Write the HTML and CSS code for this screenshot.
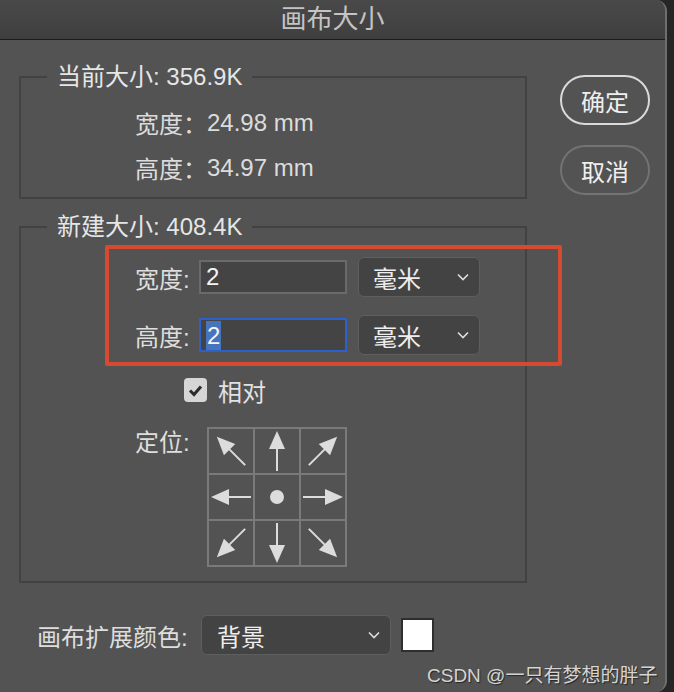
FILE: index.html
```html
<!DOCTYPE html>
<html lang="zh-CN">
<head>
<meta charset="utf-8">
<title>画布大小</title>
<link rel="stylesheet" href="styles.css">
</head>
<body>
<div class="window">
  <header class="titlebar">画布大小</header>
  <div class="main">
    <div class="left">
      <fieldset class="group current">
        <legend>当前大小: 356.9K</legend>
        <div class="info-rows">
          <div class="info-row"><span class="info-label">宽度：</span><span class="info-value">24.98 mm</span></div>
          <div class="info-row"><span class="info-label">高度：</span><span class="info-value">34.97 mm</span></div>
        </div>
      </fieldset>
      <fieldset class="group new">
        <legend>新建大小: 408.4K</legend>
        <div class="new-body">
          <div class="field-row">
            <span class="field-label">宽度:</span>
            <div class="text-input"><span>2</span></div>
            <div class="select unit"><span>毫米</span><svg class="chev" width="12" height="8" viewBox="0 0 12 8"><polyline points="1,1.5 6,6.5 11,1.5"/></svg></div>
          </div>
          <div class="field-row">
            <span class="field-label">高度:</span>
            <div class="text-input focused"><span class="selected">2</span></div>
            <div class="select unit"><span>毫米</span><svg class="chev" width="12" height="8" viewBox="0 0 12 8"><polyline points="1,1.5 6,6.5 11,1.5"/></svg></div>
          </div>
          <div class="check-row">
            <span class="checkbox"><svg width="23" height="24" viewBox="0 0 23 24"><polyline points="6,12.5 10,16.5 17,8.5"/></svg></span>
            <span class="check-label">相对</span>
          </div>
          <div class="anchor-row">
            <span class="anchor-label">定位:</span>
            <div class="anchor-grid">
              <div class="cell"><svg viewBox="0 0 44 44"><g transform="rotate(-45 22 22)"><polygon points="22,2 14,20 30,20"/><line x1="22" y1="19" x2="22" y2="42"/></g></svg></div>
              <div class="cell"><svg viewBox="0 0 44 44"><g><polygon points="22,2 14,20 30,20"/><line x1="22" y1="19" x2="22" y2="42"/></g></svg></div>
              <div class="cell"><svg viewBox="0 0 44 44"><g transform="rotate(45 22 22)"><polygon points="22,2 14,20 30,20"/><line x1="22" y1="19" x2="22" y2="42"/></g></svg></div>
              <div class="cell"><svg viewBox="0 0 44 44"><g transform="rotate(-90 22 22)"><polygon points="22,2 14,20 30,20"/><line x1="22" y1="19" x2="22" y2="42"/></g></svg></div>
              <div class="cell"><svg viewBox="0 0 44 44"><circle cx="22" cy="22" r="7"/></svg></div>
              <div class="cell"><svg viewBox="0 0 44 44"><g transform="rotate(90 22 22)"><polygon points="22,2 14,20 30,20"/><line x1="22" y1="19" x2="22" y2="42"/></g></svg></div>
              <div class="cell"><svg viewBox="0 0 44 44"><g transform="rotate(-135 22 22)"><polygon points="22,2 14,20 30,20"/><line x1="22" y1="19" x2="22" y2="42"/></g></svg></div>
              <div class="cell"><svg viewBox="0 0 44 44"><g transform="rotate(180 22 22)"><polygon points="22,2 14,20 30,20"/><line x1="22" y1="19" x2="22" y2="42"/></g></svg></div>
              <div class="cell"><svg viewBox="0 0 44 44"><g transform="rotate(135 22 22)"><polygon points="22,2 14,20 30,20"/><line x1="22" y1="19" x2="22" y2="42"/></g></svg></div>
            </div>
          </div>
        </div>
      </fieldset>
    </div>
    <div class="buttons">
      <button class="btn primary">确定</button>
      <button class="btn secondary">取消</button>
    </div>
  </div>
  <div class="bottom-row">
    <span class="bottom-label">画布扩展颜色:</span>
    <div class="select wide"><span>背景</span><svg class="chev" width="12" height="8" viewBox="0 0 12 8"><polyline points="1,1.5 6,6.5 11,1.5"/></svg></div>
    <span class="swatch"></span>
  </div>
  <div class="annotation"></div>
  <div class="watermark">CSDN @一只有梦想的胖子</div>
</div>
</body>
</html>
```

FILE: styles.css
```css
html, body {
  margin: 0;
  padding: 0;
}
body {
  background: #262626;
  font-family: "Liberation Sans", "Noto Sans CJK SC", sans-serif;
  width: 674px;
  height: 692px;
  overflow: hidden;
}
.window {
  position: relative;
  width: 667px;
  height: 692px;
  box-sizing: border-box;
  background: #535353;
  border-right: 2px solid #6e6e6e;
  border-radius: 0 11px 11px 0;
  overflow: hidden;
}
.titlebar {
  height: 39px;
  line-height: 39px;
  border-bottom: 1px solid #1c1c1c;
  background: linear-gradient(#494949, #3f3f3f);
  color: #c4c4c4;
  font-size: 26px;
  text-align: center;
}
.main {
  display: flex;
}
.left {
  padding-left: 19px;
  width: 508px;
}
.group {
  margin: 0;
  padding: 0;
  border: 2px solid #424242;
  min-width: 0;
}
.group legend {
  margin-left: 26px;
  padding: 0 10px;
  font-size: 24px;
  line-height: 30px;
  color: #e6e6e6;
}
.group.current {
  margin-top: 22px;
}
.group.new {
  margin-top: 13px;
}
.info-rows {
  padding: 8px 0 7px 114px;
}
.info-row {
  height: 45px;
  display: flex;
  align-items: center;
  font-size: 24px;
  color: #dcdcdc;
}
.info-label {
  width: 72px;
}
.new-body {
  padding: 15px 0 14px 114px;
}
.field-row {
  display: flex;
  align-items: center;
  height: 40px;
  font-size: 24px;
  color: #dedede;
}
.field-row + .field-row {
  margin-top: 18px;
}
.field-label {
  width: 64px;
}
.text-input {
  width: 148px;
  height: 34px;
  box-sizing: border-box;
  border: 2px solid #6a6a6a;
  background: #444444;
  display: flex;
  align-items: center;
  padding-left: 5px;
  color: #f4f4f4;
  font-size: 24px;
}
.text-input.focused {
  border-color: #2c60cc;
}
.text-input .selected {
  background: #4674bd;
  line-height: 29px;
  padding: 0 1px;
}
.select {
  height: 40px;
  box-sizing: border-box;
  border: 1px solid #5e5e5e;
  border-radius: 6px;
  background: #434343;
  display: flex;
  align-items: center;
  justify-content: space-between;
  color: #eeeeee;
  font-size: 24px;
}
.select.unit {
  margin-left: 11px;
  width: 122px;
  padding: 0 10px 0 14px;
}
.chev polyline {
  fill: none;
  stroke: #dddddd;
  stroke-width: 1.6;
}
.check-row {
  margin-top: 23px;
  padding-left: 49px;
  height: 24px;
  display: flex;
  align-items: center;
  gap: 11px;
  font-size: 24px;
  color: #e2e2e2;
}
.checkbox {
  width: 23px;
  height: 24px;
  border-radius: 4px;
  background: #d6d6d6;
  display: block;
}
.checkbox svg {
  display: block;
}
.checkbox polyline {
  fill: none;
  stroke: #2c2c2c;
  stroke-width: 3;
}
.anchor-row {
  margin-top: 25px;
  display: flex;
  align-items: flex-start;
}
.anchor-label {
  width: 72px;
  margin-top: 4px;
  line-height: 24px;
  font-size: 24px;
  color: #dedede;
}
.anchor-grid {
  display: grid;
  grid-template-columns: repeat(3, 44px);
  grid-auto-rows: 44px;
  gap: 2px;
  border: 2px solid #7a7a7a;
  background: #7a7a7a;
}
.cell {
  background: #535353;
}
.cell svg {
  display: block;
  width: 44px;
  height: 44px;
}
.cell polygon, .cell circle {
  fill: #dcdcdc;
}
.cell line {
  stroke: #dcdcdc;
  stroke-width: 2;
}
.buttons {
  margin-left: 33px;
  margin-top: 35px;
  display: flex;
  flex-direction: column;
  gap: 20px;
}
.btn {
  width: 90px;
  height: 50px;
  border-radius: 25px;
  background: transparent;
  font-family: inherit;
  font-size: 24px;
  color: #efefef;
  padding: 0;
}
.btn.primary {
  border: 2px solid #dadada;
}
.btn.secondary {
  border: 2px solid #737373;
}
.bottom-row {
  margin-top: 32px;
  padding-left: 37px;
  display: flex;
  align-items: center;
}
.bottom-label {
  width: 164px;
  font-size: 24px;
  color: #dedede;
}
.select.wide {
  width: 190px;
  padding: 0 10px 0 15px;
}
.swatch {
  margin-left: 10px;
  width: 33px;
  height: 34px;
  box-sizing: border-box;
  background: #ffffff;
  border: 2px solid #2e2e2e;
}
.annotation {
  position: absolute;
  left: 105px;
  top: 245px;
  width: 457px;
  height: 121px;
  box-sizing: border-box;
  border: 4px solid #d64a2f;
  border-radius: 2px;
}
.watermark {
  position: absolute;
  left: 427px;
  top: 660px;
  font-size: 19px;
  color: #d4d4d4;
  text-shadow: 1px 1px 1px rgba(0, 0, 0, 0.55);
  white-space: nowrap;
}
```
